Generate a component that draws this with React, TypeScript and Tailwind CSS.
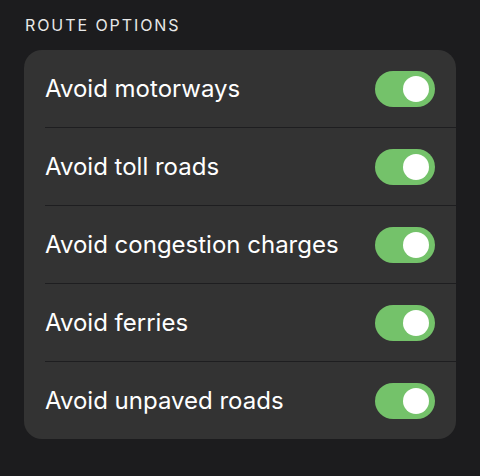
const options = [
  'Avoid motorways',
  'Avoid toll roads',
  'Avoid congestion charges',
  'Avoid ferries',
  'Avoid unpaved roads',
]

function Toggle() {
  return (
    <div className="relative h-[36px] w-[60px] shrink-0 rounded-full bg-[#74c26a]">
      <div className="absolute right-[6px] top-[5px] h-[26px] w-[26px] rounded-full bg-white" />
    </div>
  )
}

export default function App() {
  return (
    <div
      className="min-h-[476px] bg-[#1c1c1e] px-6 pt-[16px] text-white"
      style={{ fontFamily: 'Inter, "Noto Sans", sans-serif' }}
    >
      <h2 className="mb-[15px] pl-[1px] text-[16px] leading-[19px] tracking-[0.12em] text-[#e8e8e8]">
        ROUTE OPTIONS
      </h2>
      <div className="overflow-hidden rounded-[18px] bg-[#333333]">
        {options.map((label, i) => (
          <div key={label} className="pl-[21px]">
            <div
              className={
                'flex items-center justify-between pr-[21px]' +
                (i < options.length - 1 ? ' h-[78px] border-b border-[#1e1e20]' : ' h-[77px]')
              }
            >
              <span className="text-[24px] leading-none">{label}</span>
              <Toggle />
            </div>
          </div>
        ))}
      </div>
    </div>
  )
}
